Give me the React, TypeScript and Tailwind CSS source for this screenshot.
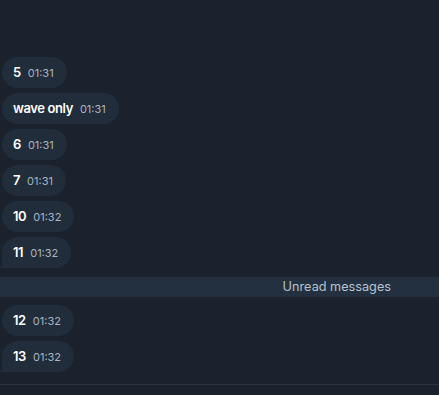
const groups = [
    [
        { text: "5", time: "01:31" },
        { text: "wave only", time: "01:31" },
        { text: "6", time: "01:31" },
        { text: "7", time: "01:31" },
        { text: "10", time: "01:32" },
        { text: "11", time: "01:32" },
    ],
];

const unread = [
    { text: "12", time: "01:32" },
    { text: "13", time: "01:32" },
];

const Bubble = ({ text, time, tail }: { text: string; time: string; tail?: boolean }) => {
    return (
        <div className="relative self-start">
            <div
                className={
                    "flex h-[31px] items-center bg-[#212d3b] pl-[11px] pr-[13px] rounded-[16px] " +
                    (tail ? "rounded-bl-[4px]" : "")
                }
            >
                <span className="text-[13px] font-semibold tracking-[-0.4px] text-white">{text}</span>
                <span className="ml-[7px] translate-y-[1px] text-[11px] text-[#a9b4c0]">{time}</span>
            </div>
            {tail && (
                <svg className="absolute bottom-0 -left-[3px]" width="10" height="10" viewBox="0 0 10 10">
                    <path d="M10 0 L10 10 L0 10 C3 9 5 6 6 2 Z" fill="#212d3b" />
                </svg>
            )}
        </div>
    );
};

export default function App() {
    return (
        <div
            className="flex h-[395px] w-[439px] flex-col overflow-hidden bg-[#19222d]"
            style={{ fontFamily: "Inter, 'Noto Sans', sans-serif" }}
        >
            <div className="flex flex-col gap-[5px] pl-[2px] pt-[57px]">
                {groups[0].map((m, i) => (
                    <Bubble key={m.text} text={m.text} time={m.time} tail={i === groups[0].length - 1} />
                ))}
            </div>

            <div className="mt-[9px] flex h-[20px] items-center justify-end bg-[#233040] pr-[48px]">
                <span className="text-[12.7px] text-[#b7c2ce]">Unread messages</span>
            </div>

            <div className="mt-[8px] flex flex-col gap-[5px] pl-[2px]">
                {unread.map((m, i) => (
                    <Bubble key={m.text} text={m.text} time={m.time} tail={i === unread.length - 1} />
                ))}
            </div>

            <div className="mt-[12px] h-px bg-[#273342]" />
        </div>
    );
}
